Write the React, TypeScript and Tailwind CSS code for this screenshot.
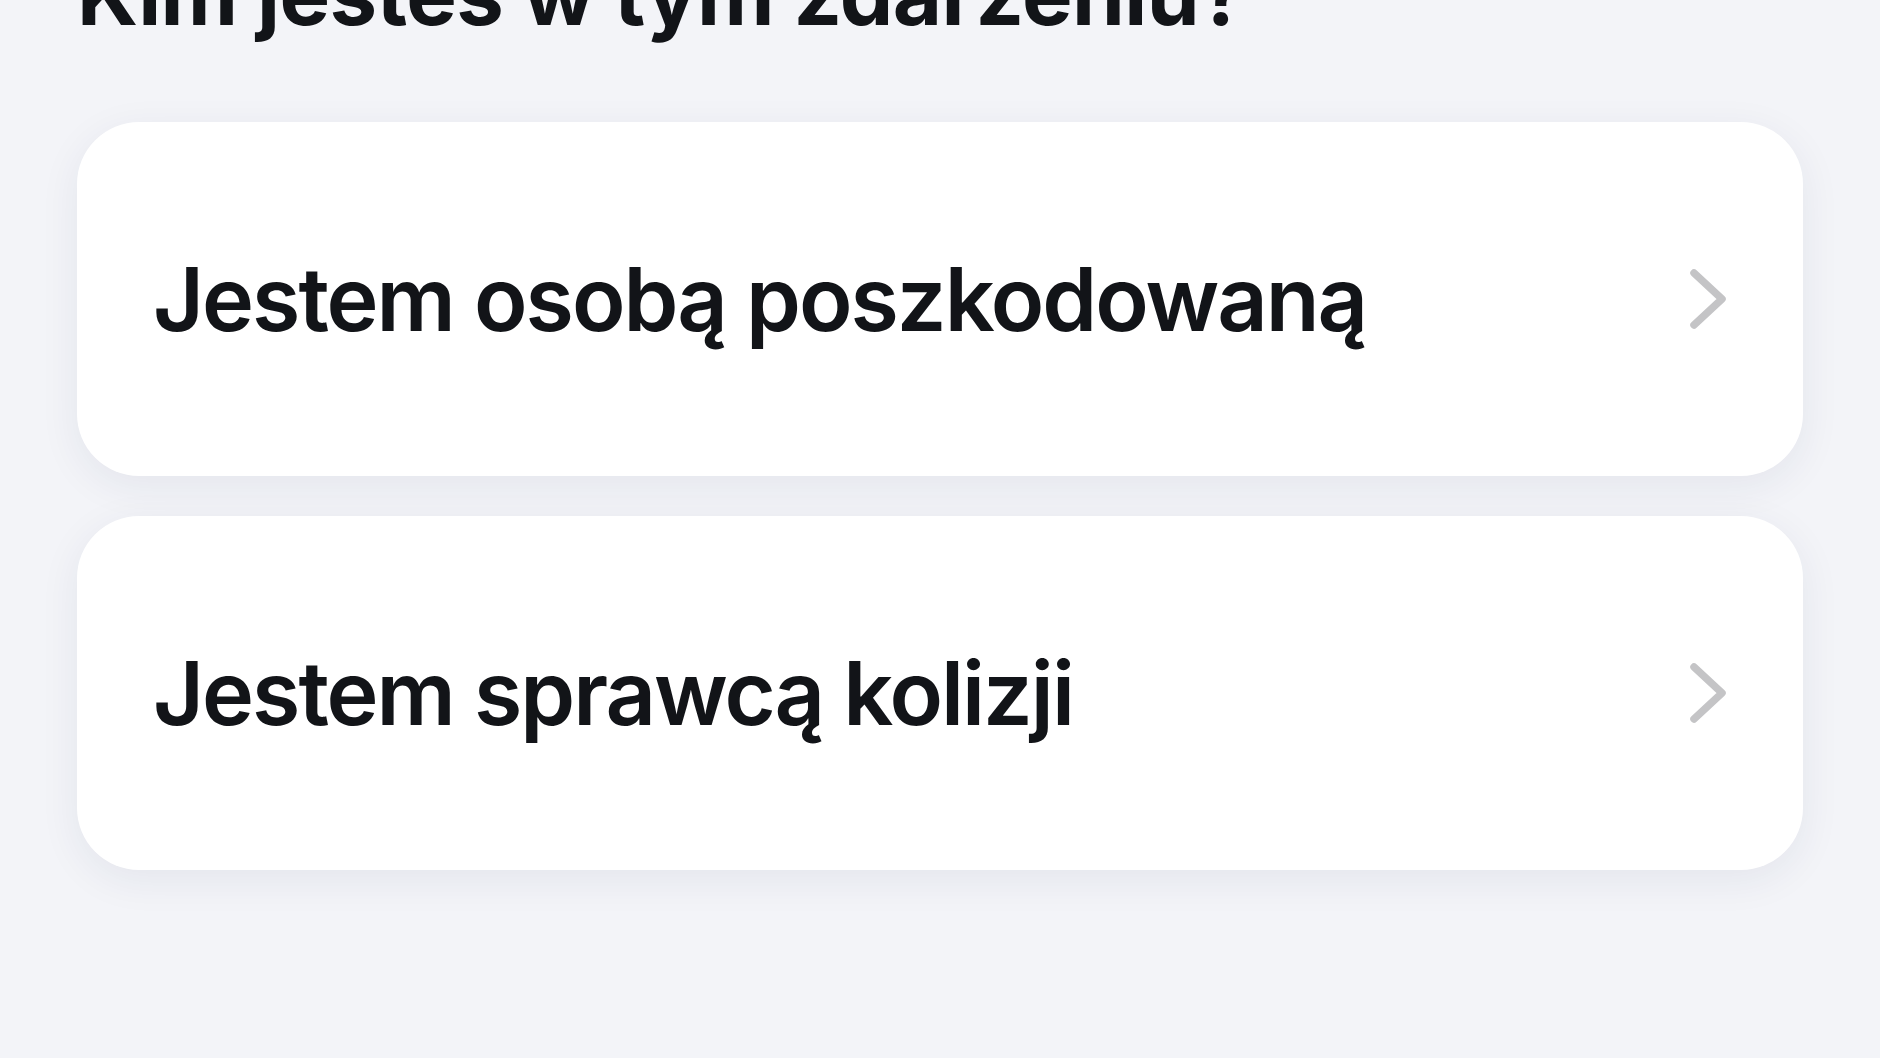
const options = ["Jestem osobą poszkodowaną", "Jestem sprawcą kolizji"];

const Chevron = () => (
  <svg width="36" height="60" viewBox="0 0 36 60" fill="none" className="shrink-0">
    <polyline
      points="4,4 32,30 4,56"
      stroke="#c4c4c6"
      strokeWidth="7.5"
      strokeLinecap="round"
      strokeLinejoin="round"
    />
  </svg>
);

export default function App() {
  return (
    <div className="min-h-screen w-full overflow-hidden bg-[#f3f4f8] px-[77px] font-['Inter',_'Noto_Sans',_sans-serif] text-[#121418]">
      <h1 className="-mt-[48px] text-[85px] leading-[85px] font-bold tracking-[-0.6px]">
        Kim jesteś w tym zdarzeniu?
      </h1>

      <div className="mt-[85px] flex flex-col gap-[40px]">
        {options.map((label) => (
          <button
            key={label}
            className="flex h-[354px] w-full items-center justify-between rounded-[62px] bg-white pl-[76px] pr-[77px] text-left shadow-[0_10px_40px_rgba(30,40,80,0.07)]"
          >
            <span className="text-[88px] leading-[88px] font-semibold tracking-[-2px]">{label}</span>
            <Chevron />
          </button>
        ))}
      </div>
    </div>
  );
}
